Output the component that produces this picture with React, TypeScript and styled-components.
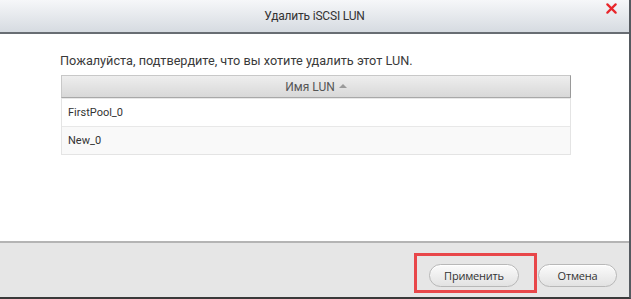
import React from "react";
import styled, { createGlobalStyle } from "styled-components";

const GlobalStyle = createGlobalStyle`
  html, body {
    margin: 0;
    padding: 0;
    background: #ffffff;
  }
  body {
    font-family: Roboto, "Noto Sans", sans-serif;
  }
`;

const Dialog = styled.div`
  width: 631px;
  height: 299px;
  display: flex;
  flex-direction: column;
  box-sizing: border-box;
  border-right: 2px solid #555a60;
  border-bottom: 2px solid #3a3a3a;
  background: #ffffff;
  overflow: hidden;
`;

const Header = styled.div`
  position: relative;
  height: 32px;
  flex: none;
  display: flex;
  align-items: center;
  justify-content: center;
  background: linear-gradient(#f6f7f9, #d6dbe1);
  border-bottom: 2px solid #686d73;
`;

const Title = styled.div`
  font-family: Roboto, "Liberation Sans", sans-serif;
  font-size: 12px;
  color: #333333;
  letter-spacing: -0.2px;
`;

const Close = styled.button`
  position: absolute;
  right: 12px;
  top: 3px;
  width: 11px;
  height: 11px;
  padding: 0;
  border: none;
  background: transparent;
  display: flex;
`;

const Body = styled.div`
  flex: 1;
  padding: 16px 60px 0 60px;
  display: flex;
  flex-direction: column;
  gap: 6px;
`;

const Message = styled.div`
  font-size: 12.7px;
  color: #3a3a3a;
  line-height: 16px;
  padding-top: 3px;
`;

const Table = styled.div`
  width: 508px;
  display: flex;
  flex-direction: column;
  border: 1px solid #e4e4e4;
  border-top: none;
  margin-left: 1px;
`;

const HeadCell = styled.div`
  height: 21px;
  display: flex;
  align-items: center;
  justify-content: center;
  gap: 4px;
  font-size: 12px;
  color: #555555;
  background: linear-gradient(#eeeeee, #d8d8d8);
  border: 1px solid #c8c8c8;
  border-bottom: 1px solid #a8a8a8;
  border-right: 1px solid #9a9a9a;
  margin: 0 -1px;
`;

const Arrow = styled.span`
  width: 0;
  height: 0;
  border-left: 4px solid transparent;
  border-right: 4px solid transparent;
  border-bottom: 4px solid #9a9a9a;
  margin-top: -1px;
`;

const Row = styled.div<{ alt?: boolean }>`
  height: 27px;
  display: flex;
  align-items: center;
  padding-left: 6px;
  font-size: 11px;
  color: #333333;
  background: ${(p) => (p.alt ? "#f9f9f9" : "#ffffff")};
  border-top: 1px solid #e8e8e8;
  &:first-of-type {
    border-top: none;
  }
`;

const Footer = styled.div`
  height: 56px;
  box-sizing: border-box;
  flex: none;
  background: #e6e6e6;
  border-top: 2px solid #b4b4b4;
  display: flex;
  align-items: flex-start;
  justify-content: flex-end;
  padding: 10px 12px 0 0;
  gap: 1px;
`;

const Highlight = styled.div`
  border: 3px solid #e8474a;
  padding: 8px 15px 3px 12px;
`;

const Button = styled.button<{ w: number }>`
  width: ${(p) => p.w}px;
  height: 23px;
  border-radius: 12px;
  border: 1px solid #b8b8b8;
  background: linear-gradient(#fbfbfb, #e2e2e2);
  font-family: "Open Sans", "Noto Sans", sans-serif;
  font-size: 11px;
  letter-spacing: -0.2px;
  color: #333333;
  padding: 0;
  box-shadow: inset 0 1px 0 #ffffff;
`;

const CancelWrap = styled.div`
  margin-top: 11px;
`;

export default function App() {
  return (
    <>
      <GlobalStyle />
      <Dialog>
        <Header>
          <Title>Удалить iSCSI LUN</Title>
          <Close aria-label="close">
            <svg width="11" height="11" viewBox="0 0 12 12">
              <path d="M1.5 1.5 L10.5 10.5 M10.5 1.5 L1.5 10.5" stroke="#e8262b" strokeWidth="2.4" strokeLinecap="round" />
            </svg>
          </Close>
        </Header>
        <Body>
          <Message>Пожалуйста, подтвердите, что вы хотите удалить этот LUN.</Message>
          <Table>
            <HeadCell>
              Имя LUN <Arrow />
            </HeadCell>
            <Row>FirstPool_0</Row>
            <Row alt>New_0</Row>
          </Table>
        </Body>
        <Footer>
          <Highlight>
            <Button w={90}>Применить</Button>
          </Highlight>
          <CancelWrap>
            <Button w={79}>Отмена</Button>
          </CancelWrap>
        </Footer>
      </Dialog>
    </>
  );
}
